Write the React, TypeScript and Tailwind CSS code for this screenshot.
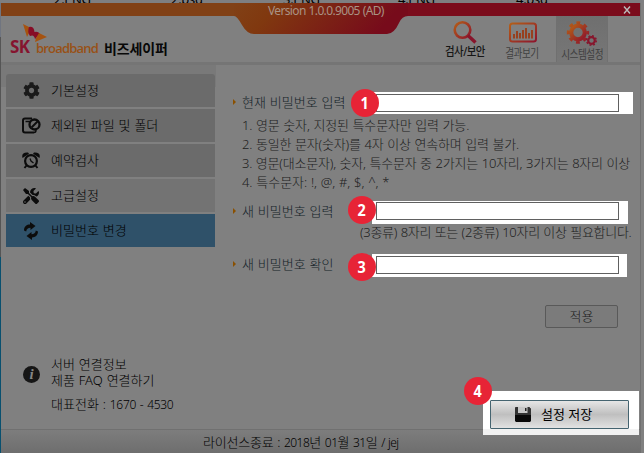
import React from "react";
import { FaCog, FaTools } from "react-icons/fa";

const latin = "font-['Noto_Sans','Noto_Sans_CJK_KR',sans-serif]";

function GearIcon({ className }: { className: string }) {
  return <FaCog className={className} />;
}

function ExcludeIcon() {
  return (
    <svg width="20" height="17" viewBox="0 0 20 17" fill="none" stroke="#0c0c0c" strokeWidth="2">
      <path d="M13 15.5H4Q2 15.5 2 13.5V3.500Q2 1.500 4 1.500H11" />
      <path d="M4.500 4.500H9M13 15.500Q15 15.500 15 13" strokeWidth="1.500" />
      <circle cx="13.500" cy="7.500" r="5" strokeWidth="2.300" />
      <path d="M10.500 10.500L17 4" />
    </svg>
  );
}

function AlarmIcon() {
  return (
    <svg width="18" height="17" viewBox="0 0 18 17" fill="none" stroke="#0c0c0c">
      <circle cx="9" cy="9" r="5.900" strokeWidth="2.200" />
      <path d="M8 6.500L9 9L11.500 11" strokeWidth="1.300" />
      <path d="M.5 6Q-1 0 6 .5L7 1.800ZM17.500 6Q19 0 12 .5L11 1.800Z" fill="#0c0c0c" stroke="none" />
      <path d="M4.500 13.500L2.500 16M13.500 13.500L15.500 16" strokeWidth="2" />
    </svg>
  );
}

function RefreshIcon() {
  return (
    <svg width="14" height="18" viewBox="0 0 14 18" fill="#0c0c0c">
      <path d="M0 8.500C0 4.500 3 2.500 6 2.600V0L11.500 4L6.500 8V5.800C4 5.800 2.500 7 2.200 9.500Z" />
      <path d="M14 9.500C14 13.500 11 15.500 8 15.400V18L2.500 14L7.500 10V12.200C10 12.200 11.500 11 11.800 8.500Z" />
    </svg>
  );
}

const menu = [
  { label: "기본설정", icon: <GearIcon className="size-[17px] text-[#1a1a1a]" />, bg: "rounded-t-[3px] bg-[#6b6b6b]" },
  { label: "제외된 파일 및 폴더", icon: <ExcludeIcon />, bg: "bg-[#6b6b6b]" },
  { label: "예약검사", icon: <AlarmIcon />, bg: "bg-[#6b6b6b]" },
  { label: "고급설정", icon: <FaTools className="size-4 text-[#0c0c0c]" />, bg: "bg-[#737373]" },
  { label: "비밀번호 변경", icon: <RefreshIcon />, bg: "bg-[#2f5169]" },
];

function Badge({ n, pos }: { n: number; pos: string }) {
  return (
    <span className={`absolute z-10 flex size-7 items-center justify-center rounded-full bg-[#e72436] font-['Open_Sans',sans-serif] text-[16px] font-bold leading-none text-white ${pos}`}>
      <span className="scale-x-90">{n}</span>
    </span>
  );
}

/** Western digits and punctuation, set narrower than the Hangul beside them. */
function Num({ children }: { children: React.ReactNode }) {
  return <span className="text-[12px] tracking-[-0.5px]">{children}</span>;
}

function Field({ n, label, row, box, badge }: {
  n: number; label: string; row: string; box: string; badge: string;
}) {
  return (
    <div className={`relative flex shrink-0 ${row}`}>
      <div className="flex h-5 w-[156px] shrink-0 items-center whitespace-nowrap pl-[17px] text-[#131f28]">
        <span className="mr-[6px] border-y-[3px] border-l-[3px] border-y-transparent border-l-[#8a5000]" />
        {label}
      </div>
      <div className={`h-full shrink-0 bg-white pl-1 ${box}`}>
        <div className="h-[18px] w-[243px] border border-[#606060] bg-white" />
      </div>
      <Badge n={n} pos={badge} />
    </div>
  );
}

function Logo() {
  return (
    <div className="flex h-full w-[200px] shrink-0 pl-[9px]">
      <div className="relative w-[94px]">
        <svg className="absolute left-[13px] top-[8px]" width="25" height="19" viewBox="0 0 25 19">
          <path d="M0 0L6 3L6 9L4 13Z" fill="#a65310" />
          <path d="M6 3Q11 2 11.500 8Q15 7 17 10L12 15Q11 10 7 12Q4 8 6 3Z" fill="#870c26" />
          <path d="M16 9L24 13L12 18L13 14Z" fill="#a65310" />
        </svg>
        <div className="flex items-baseline whitespace-nowrap pt-[20px] font-['Open_Sans',sans-serif] leading-[22px]">
          <span className="w-[26px] text-[17px] font-bold tracking-[-0.6px] text-[#85142f]">SK</span>
          <span className="text-[13px] font-semibold tracking-[-0.8px] text-[#985116]">broadband</span>
        </div>
      </div>
      <span className="whitespace-nowrap pt-[22px] text-[14px] font-bold leading-[22px] tracking-[-0.1px] text-[#080808]">비즈세이퍼</span>
    </div>
  );
}

function Tools() {
  return (
    <nav className="flex h-full text-[12px] leading-[14px] tracking-[-0.6px]">
      <div className="mr-[-1px] flex w-[54px] flex-col items-center whitespace-nowrap pt-[4px] text-[#161616]">
        <svg width="26" height="24" viewBox="0 0 26 24" fill="none">
          <defs>
            <linearGradient id="warm" x1="0" y1="0" x2="1" y2="1">
              <stop stopColor="#b45e18" /><stop offset="1" stopColor="#8e152c" />
            </linearGradient>
          </defs>
          <circle cx="10.500" cy="10" r="7.800" stroke="url(#warm)" strokeWidth="2.600" />
          <path d="M16 15.500L23.500 22.500" stroke="#87152c" strokeWidth="3.400" />
        </svg>
        <span className="mt-[1px] scale-x-[.87] font-medium">검사/보안</span>
      </div>
      <div className="flex w-[62px] flex-col items-center whitespace-nowrap pt-[6px] text-[#404040]">
        <svg className="ml-px" width="28" height="21" viewBox="0 0 28 21" fill="none">
          <rect x="1" y="1.500" width="26" height="18" rx="2.500" stroke="url(#warm)" strokeWidth="2" />
          <path d="M5 16.500V12M8 16.500V9M11 16.500V11M14 16.500V8M17 16.500V6M20 16.500V11M23 16.500V8" stroke="#97401f" strokeWidth="2" />
        </svg>
        <span className="mt-[4px] scale-x-[.8] font-normal">결과보기</span>
      </div>
      <div className="ml-[3px] flex w-[52px] flex-col items-center whitespace-nowrap border-x border-[#707070] bg-linear-to-b from-[#6f6f6f] to-[#777777] pt-[5px] text-[#404040]">
        <svg width="32" height="26" viewBox="0 0 32 26" fill="none">
          <circle cx="12" cy="11.500" r="6.800" stroke="url(#warm)" strokeWidth="4.200" />
          <circle cx="12" cy="11.500" r="9.700" stroke="url(#warm)" strokeWidth="3" strokeDasharray="3.809 3.809" strokeDashoffset="1.900" />
          <circle cx="25.500" cy="19.500" r="3.300" stroke="#87152c" strokeWidth="2.200" />
          <circle cx="25.500" cy="19.500" r="4.800" stroke="#87152c" strokeWidth="1.500" strokeDasharray="1.885 1.885" />
        </svg>
        <span className="mt-px scale-x-[.8] font-normal">시스템설정</span>
      </div>
    </nav>
  );
}

export default function App() {
  return (
    <div className={`flex h-[453px] w-[644px] flex-col overflow-hidden bg-[#808080] text-[13px] font-light leading-[19px] text-black [word-spacing:0.5px] ${latin}`}>
      <div className="flex h-[3px] shrink-0 items-end overflow-hidden bg-[#7e7f81] pl-[54px] font-normal leading-[7px] tracking-[-0.3px] [word-spacing:0]">
        <span className="w-[117px]">2.PNG</span>
        <span className="w-[112px]">2.psd</span>
        <span className="w-[115px]">3.PNG</span>
        <span className="w-[118px]">4.PNG</span>
        <span>4.psd</span>
      </div>
      <div className="flex h-[450px]">
        <div className="flex w-px flex-col">
          <div className="h-[34px] bg-[#707580]" />
          <div className="h-[220px] bg-[#555]" />
          <div className="h-[196px] bg-[#08506f]" />
        </div>
        <main className="flex w-[640px] flex-col border-r border-[#707070]">
          <header className="relative flex h-[13px] shrink-0 items-center bg-linear-to-r from-[#814116] from-40% to-[#7b0c1c] to-60%">
            <svg className="absolute left-[233px] top-0" width="174" height="31" viewBox="0 0 174 31">
              <defs>
                <linearGradient id="tab" x1="0" y1="0" x2="1" y2=".15">
                  <stop stopColor="#814116" /><stop offset=".25" stopColor="#80380f" /><stop offset=".95" stopColor="#770b1b" />
                </linearGradient>
              </defs>
              <path d="M0 0H174V13Q168 13 165 20Q160 31 153 31H20Q13 31 8 22Q3 13 0 13Z" fill="url(#tab)" />
            </svg>
            <span className="absolute left-[267px] top-px whitespace-nowrap text-[12px] font-normal leading-[13px] tracking-[-0.65px] text-[#a99284]">Version 1.0.0.9005 (AD)</span>
            <svg className="absolute left-[622px] top-[3px]" width="8" height="8" viewBox="0 0 8 8">
              <path d="M1 .5L7 7.500M7 .5L1 7.500" stroke="#bbb" strokeWidth="1.400" />
            </svg>
          </header>
          <div className="flex h-[46px] shrink-0 justify-between pr-[32px]">
            <Logo />
            <Tools />
          </div>
          <div className="h-[3px] shrink-0 bg-[#757575]" />
          <div className="flex h-[364px] shrink-0">
            <aside className="flex w-[215px] flex-col">
              <div className="flex flex-col gap-[2px] bg-linear-to-b from-[#797979] from-[22px] to-[#808080] to-[22px] pl-[5px] pr-px pt-[9px]">
                {menu.map((m) => (
                  <div key={m.label} className={`flex h-[33px] items-center ${m.bg}`}>
                    <span className="flex w-[45px] items-center justify-center pl-[5px]">{m.icon}</span>
                    <span className="whitespace-nowrap pb-px">{m.label}</span>
                  </div>
                ))}
              </div>
              <div className="mt-[109px] flex pl-[22px]">
                <span className="mt-[10px] flex size-[17px] shrink-0 items-center justify-center rounded-full bg-[#161616] font-['Liberation_Serif',serif] text-[15px] font-bold italic leading-none text-[#858585]">i</span>
                <div className="pl-[11px] leading-4 whitespace-nowrap">
                  <p>서버 연결정보</p>
                  <p>제품 FAQ 연결하기</p>
                  <p className="mt-2">대표전화 : <span className="text-[12px] tracking-[-0.3px] [word-spacing:1px]">1670 - 4530</span></p>
                </div>
              </div>
            </aside>
            <section className="mt-[3px] flex w-[424px] flex-col text-[#202020]">
              <Field n={1} label="현재 비밀번호 입력" row="mt-[24px] h-[22px]" box="w-[261px] pt-[2px]" badge="left-[135px] top-[-3px]" />
              <ol className="mt-[2px] shrink-0 pl-[26px] whitespace-nowrap">
                <li className="tracking-[-0.16px]">1. 영문 숫자, 지정된 특수문자만 입력 가능.</li>
                <li className="tracking-[-0.18px]">2. 동일한 문자(숫자)를 4자 이상 연속하며 입력 불가.</li>
                <li className="tracking-[-0.21px]">3. 영문(대소문자), 숫자, 특수문자 중 2가지는 10자리, 3가지는 8자리 이상</li>
                <li className="tracking-[-0.05px]">4. 특수문자: !, @, #, $, ^, *</li>
              </ol>
              <Field n={2} label="새 비밀번호 입력" row="mt-[9px] h-[23px]" box="w-[256px] pt-px" badge="left-[132px] top-[-5px]" />
              <p className="-mt-px shrink-0 pl-[144px] whitespace-nowrap tracking-[-0.3px]">(3종류) 8자리 또는 (2종류) 10자리 이상 필요합니다.</p>
              <Field n={3} label="새 비밀번호 확인" row="mt-[12px] h-[23px]" box="w-[255px] pt-[2px]" badge="left-[132px] top-[-1px]" />
              <button className="ml-[329px] mt-[28px] h-[23px] w-[73px] shrink-0 rounded-[2px] border border-[#595959] bg-[#7b7b7b] pb-px leading-5">적용</button>
              <div className="relative ml-[267px] mt-[63px] h-[44px] w-[156px] shrink-0 bg-linear-to-b from-white from-[38px] to-[#f2f2f2] to-[38px] pl-[7px] pt-[9px]">
                <button className="flex h-[29px] w-[139px] items-center rounded-[1px] border border-[#456470] bg-linear-to-b from-[#e6e6e6] via-[#bfbfbf] to-[#e2e2e2] pl-[24px] font-normal text-black">
                  <svg width="16" height="15" viewBox="0 0 16 15">
                    <path d="M1 0H14L16 2V14L15 15H1L0 14V1Z" fill="#090909" />
                    <path d="M0 8H16V2L14 0H1L0 1Z" fill="#333" />
                    <path d="M3 0H12.500V6H3Z" fill="#c7c7c7" />
                    <path d="M10 1H11.500V4H10Z" fill="#222" />
                  </svg>
                  <span className="ml-[10px] whitespace-nowrap">설정 저장</span>
                </button>
                <Badge n={4} pos="left-[-19px] top-[-14px]" />
              </div>
            </section>
          </div>
          <footer className="h-[24px] shrink-0 border-t border-[#707070] bg-linear-to-b from-[#7d7d7d] to-[#6e6e6e] pl-[202px] pt-[3px] tracking-[-0.2px] whitespace-nowrap">
            라이선스종료 : <Num>2018</Num>년 <Num>01</Num>월 <Num>31</Num>일 <Num>/ jej</Num>
          </footer>
        </main>
      </div>
    </div>
  );
}
